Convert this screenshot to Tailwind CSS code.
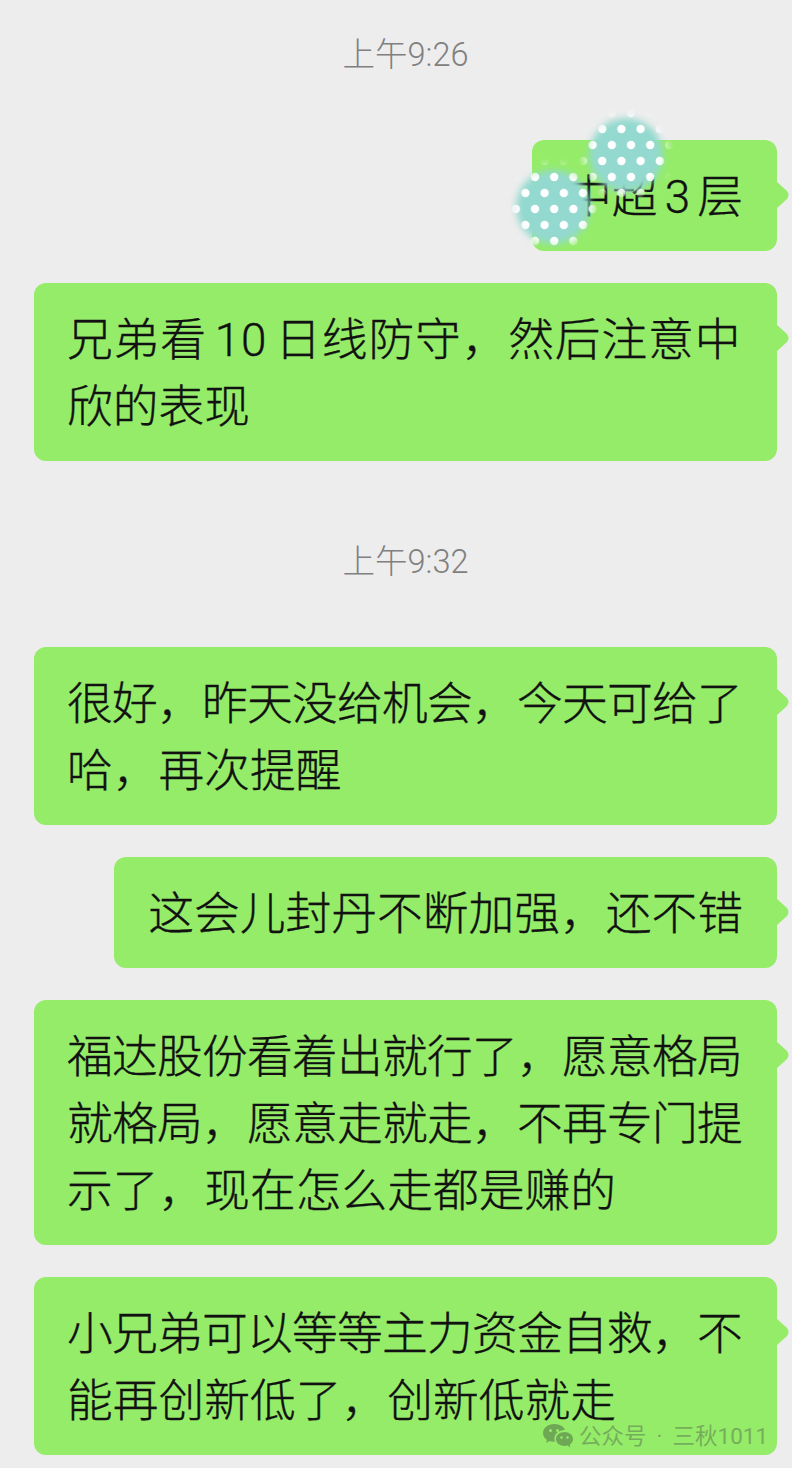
<!DOCTYPE html>
<html lang="zh-CN">
<head>
  <meta charset="UTF-8">
  <title>聊天记录</title>
  <script src="https://cdn.jsdelivr.net/npm/@tailwindcss/browser@4"></script>
</head>
<body class="bg-[#ededed] font-['Roboto','Noto_Sans_CJK_SC',sans-serif]">
  <div class="relative w-[792px] h-[1468px] overflow-hidden pt-[34px] pl-[34px] pr-[15px]">

    <p class="h-[42px] mb-[64px] text-center text-[32.5px] font-light leading-[42px] text-[#808080]">上午9:26</p>

    <div class="flex flex-col gap-[32px]">
      <div class="relative self-end whitespace-nowrap rounded-[12px] bg-[#95ec69] pl-[34px] pr-[34px] pt-[24px] pb-[20px] text-[45.75px] font-light leading-[67px] text-[#111] [-webkit-text-stroke:0.35px_#111] [word-spacing:-4px]">
        中超 3 层
        <svg class="absolute right-[-13px] top-[41px]" width="14" height="28" viewBox="0 0 14 28"><path d="M0 0 L11 10 Q14 14 11 18 L0 28 Z" fill="#95ec69"/></svg>
      </div>
      <div class="relative whitespace-nowrap rounded-[12px] bg-[#95ec69] pl-[33px] pr-[35px] pt-[24px] pb-[20px] text-[45.75px] font-light leading-[67px] text-[#111] [-webkit-text-stroke:0.35px_#111]">
        <span class="tracking-[0.85px] [word-spacing:-4px]">兄弟看 10 日线防守，然后注意中</span><br>欣的表现
        <svg class="absolute right-[-13px] top-[41px]" width="14" height="28" viewBox="0 0 14 28"><path d="M0 0 L11 10 Q14 14 11 18 L0 28 Z" fill="#95ec69"/></svg>
      </div>
    </div>

    <p class="h-[42px] mt-[80px] mb-[64px] text-center text-[32.5px] font-light leading-[42px] text-[#808080]">上午9:32</p>

    <div class="flex flex-col gap-[32px]">
      <div class="relative whitespace-nowrap rounded-[12px] bg-[#95ec69] pl-[33px] pr-[35px] pt-[24px] pb-[20px] text-[45.75px] font-light leading-[67px] text-[#111] [-webkit-text-stroke:0.35px_#111]">
        <span class="tracking-[-0.75px]">很好，昨天没给机会，今天可给了</span><br>哈，再次提醒
        <svg class="absolute right-[-13px] top-[41px]" width="14" height="28" viewBox="0 0 14 28"><path d="M0 0 L11 10 Q14 14 11 18 L0 28 Z" fill="#95ec69"/></svg>
      </div>
      <div class="relative self-end whitespace-nowrap rounded-[12px] bg-[#95ec69] pl-[34px] pr-[34px] pt-[24px] pb-[20px] text-[45.75px] font-light leading-[67px] text-[#111] [-webkit-text-stroke:0.35px_#111]">
        这会儿封丹不断加强，还不错
        <svg class="absolute right-[-13px] top-[41px]" width="14" height="28" viewBox="0 0 14 28"><path d="M0 0 L11 10 Q14 14 11 18 L0 28 Z" fill="#95ec69"/></svg>
      </div>
      <div class="relative whitespace-nowrap rounded-[12px] bg-[#95ec69] pl-[33px] pr-[35px] pt-[24px] pb-[20px] text-[45.75px] font-light leading-[67px] text-[#111] [-webkit-text-stroke:0.35px_#111]">
        <span class="tracking-[-0.75px]">福达股份看着出就行了，愿意格局</span><br><span class="tracking-[-0.75px]">就格局，愿意走就走，不再专门提</span><br>示了，现在怎么走都是赚的
        <svg class="absolute right-[-13px] top-[41px]" width="14" height="28" viewBox="0 0 14 28"><path d="M0 0 L11 10 Q14 14 11 18 L0 28 Z" fill="#95ec69"/></svg>
      </div>
      <div class="relative whitespace-nowrap rounded-[12px] bg-[#95ec69] pl-[33px] pr-[35px] pt-[24px] pb-[20px] text-[45.75px] font-light leading-[67px] text-[#111] [-webkit-text-stroke:0.35px_#111]">
        <span class="tracking-[-0.75px]">小兄弟可以等等主力资金自救，不</span><br>能再创新低了，创新低就走
        <svg class="absolute right-[-13px] top-[41px]" width="14" height="28" viewBox="0 0 14 28"><path d="M0 0 L11 10 Q14 14 11 18 L0 28 Z" fill="#95ec69"/></svg>
      </div>
    </div>

    <!-- stickers over the first bubble -->
    <svg class="absolute left-[500px] top-[100px]" width="200" height="160" viewBox="0 0 200 160">
      <defs>
        <filter id="soft" x="-30%" y="-30%" width="160%" height="160%"><feGaussianBlur stdDeviation="3.500"/></filter>
        <filter id="softer" x="-30%" y="-30%" width="160%" height="160%"><feGaussianBlur stdDeviation="5"/></filter>
        <filter id="dotblur"><feGaussianBlur stdDeviation="0.6"/></filter>
        <pattern id="dots" patternUnits="userSpaceOnUse" x="35" y="77" width="19.2" height="32">
          <circle cx="0" cy="0" r="4.200" fill="#fff"/>
          <circle cx="19.2" cy="0" r="4.200" fill="#fff"/>
          <circle cx="0" cy="32" r="4.200" fill="#fff"/>
          <circle cx="19.2" cy="32" r="4.200" fill="#fff"/>
          <circle cx="9.6" cy="16" r="4.200" fill="#fff"/>
        </pattern>
        <mask id="fade">
          <g filter="url(#softer)" fill="#fff">
            <circle cx="53" cy="107" r="41"/>
            <circle cx="126" cy="55" r="41"/>
          </g>
        </mask>
      </defs>
      <g filter="url(#soft)" fill="#93d9cf">
        <circle cx="53" cy="107" r="37"/>
        <circle cx="126" cy="55" r="37"/>
      </g>
      <g mask="url(#fade)"><rect width="200" height="160" fill="url(#dots)" filter="url(#dotblur)"/></g>
    </svg>

    <!-- watermark -->
    <div class="absolute left-[543px] top-[1421px] flex items-center gap-[6px] text-[#75ae5b]">
      <svg width="30" height="26" viewBox="0 0 30 26" fill="#6fa855">
        <path d="M11 1C5 1 0 5 0 10c0 3 1.500 5.300 4 7l-1 3 3.500-2c1.300.4 2.800.7 4.500.7h1c-.4-1-.6-2-.6-3 0-5 4.500-8.700 10-8.700h.5C21 3.500 16.500 1 11 1Z"/>
        <path d="M21.500 9C16.800 9 13 12.200 13 16s3.800 7 8.500 7c1 0 2-.2 3-.5L27.500 24.500l-.8-2.800C28.700 20.300 30 18.300 30 16c0-3.800-3.800-7-8.500-7Z"/>
        <circle cx="7.500" cy="7.500" r="1.500" fill="#95ec69"/><circle cx="14.500" cy="7.500" r="1.500" fill="#95ec69"/>
        <circle cx="18.500" cy="14.500" r="1.200" fill="#95ec69"/><circle cx="24.500" cy="14.500" r="1.200" fill="#95ec69"/>
      </svg>
      <span class="text-[22.5px] leading-[30px] whitespace-nowrap [word-spacing:4.5px]">公众号 · 三秋1011</span>
    </div>
  </div>
</body>
</html>
